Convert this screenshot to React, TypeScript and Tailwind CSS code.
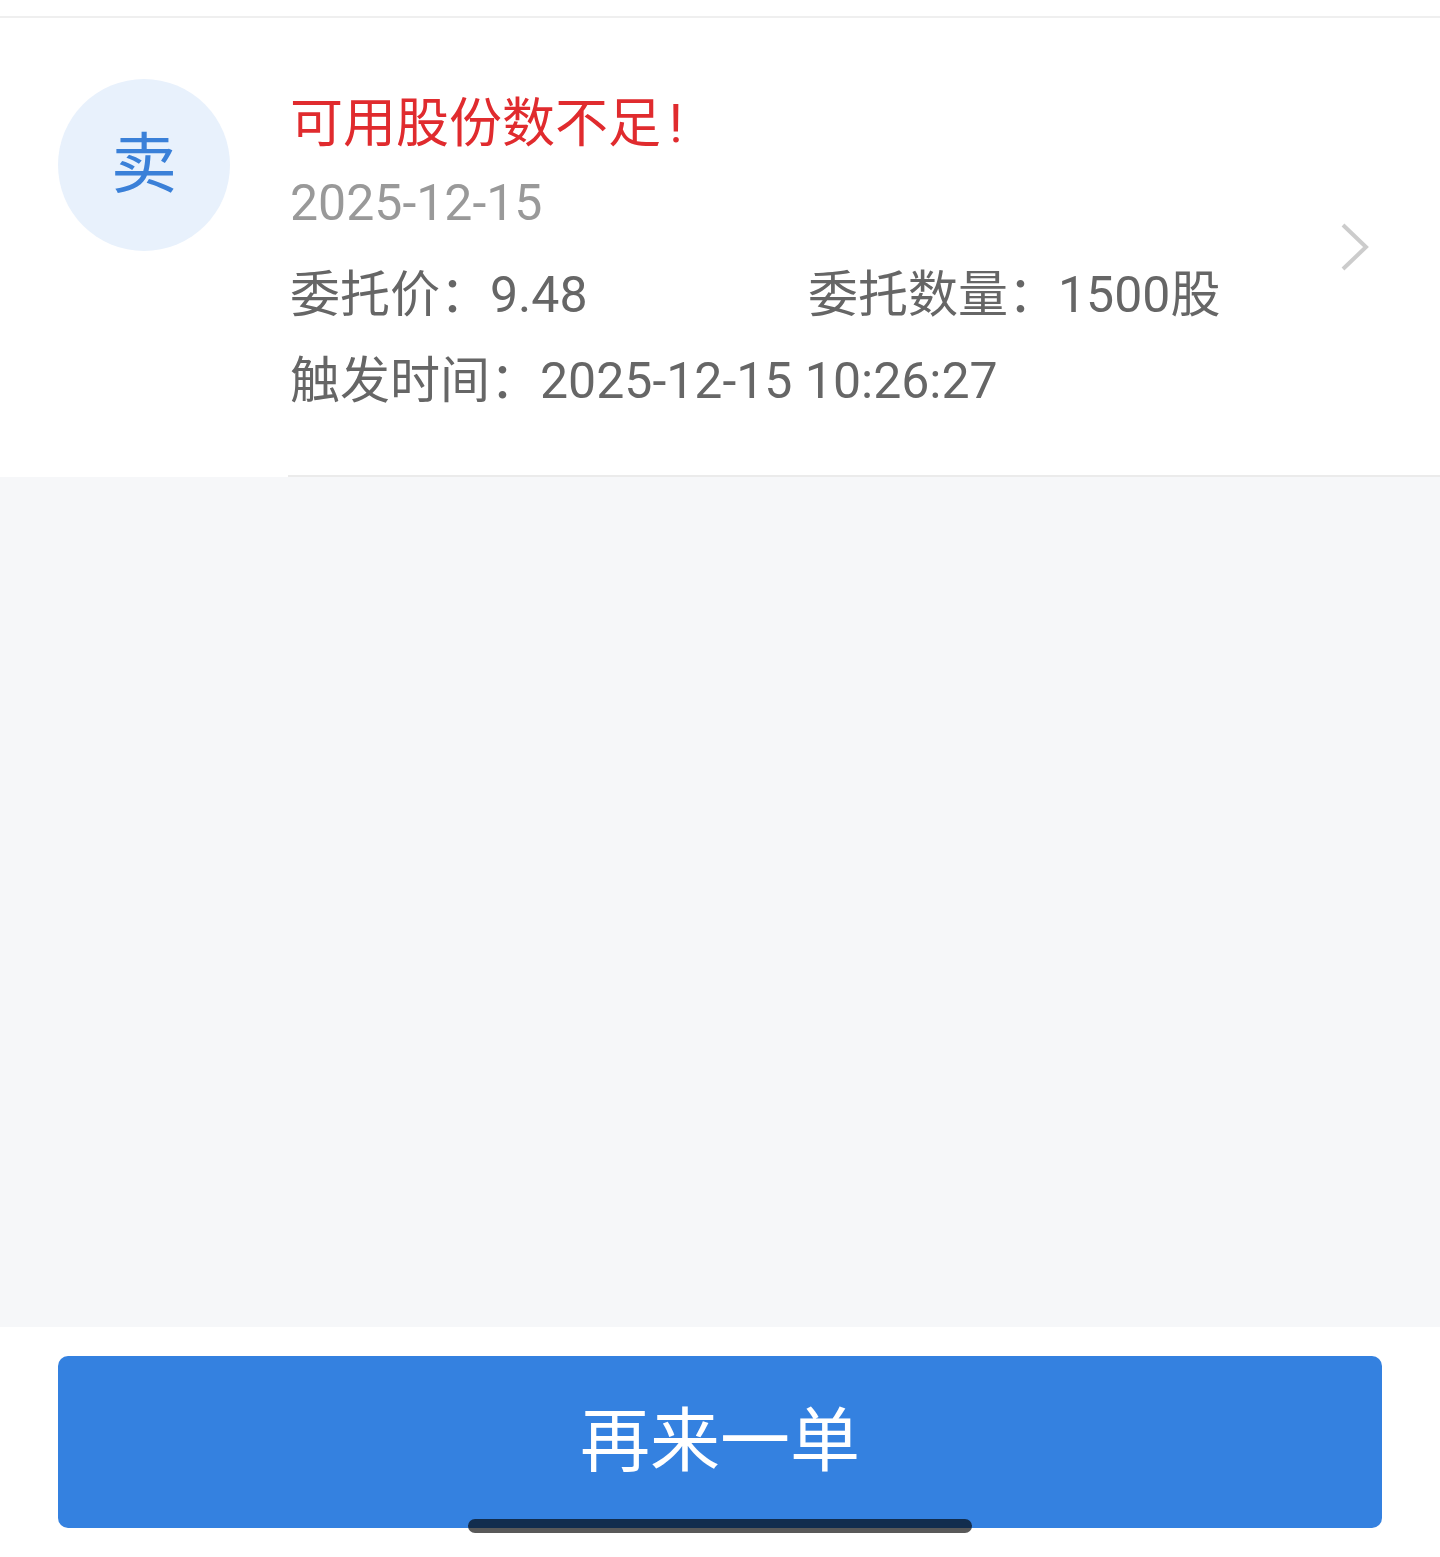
import React from 'react'

const font = { fontFamily: 'Roboto, "Noto Sans CJK SC", sans-serif' }

function Chevron() {
  return (
    <svg width="30" height="50" viewBox="0 0 30 50" fill="none">
      <polyline points="3,3 26,25 3,47" stroke="#cccccc" strokeWidth="4" strokeLinejoin="miter" />
    </svg>
  )
}

export default function App() {
  return (
    <div className="relative flex h-[1557px] w-full flex-col bg-[#f6f7f9]" style={font}>
      {/* top strip */}
      <div className="h-[18px] border-b-2 border-[#efefef] bg-white" />

      {/* order card */}
      <div className="flex h-[459px] bg-white pl-[58px]">
        <div className="mt-[61px] flex h-[172px] w-[172px] shrink-0 items-center justify-center rounded-full bg-[#e8f1fc]">
          <span className="text-[66px] leading-none text-[#3a80d8]">卖</span>
        </div>
        <div className="ml-[58px] flex flex-1 items-center border-b-2 border-[#ebebeb] pr-[70px]">
          <div className="flex h-full flex-1 flex-col pl-[2px] pt-[74px]">
            <div className="text-[53px] leading-[64px] text-[#e02b2e]">
              可用股份数不足<span className="ml-[8px]">!</span>
            </div>
            <div className="mt-[19px] text-[50px] leading-[56px] text-[#999999]">2025-12-15</div>
            <div className="mt-[21px] flex text-[50px] leading-[86px] text-[#666666]">
              <span className="w-[518px]">委托价：9.48</span>
              <span>委托数量：1500股</span>
            </div>
            <div className="text-[50px] leading-[86px] text-[#666666]">触发时间：2025-12-15 10:26:27</div>
          </div>
          <Chevron />
        </div>
      </div>

      <div className="flex-1" />

      {/* footer */}
      <div className="h-[230px] bg-white px-[58px] pt-[29px]">
        <button className="flex h-[172px] w-full items-center justify-center rounded-[10px] bg-[#3481e0] text-[70px] text-white">
          再来一单
        </button>
      </div>

      {/* home indicator */}
      <div className="absolute left-[468px] top-[1519px] h-[14px] w-[504px] rounded-full bg-black/65" />
    </div>
  )
}
